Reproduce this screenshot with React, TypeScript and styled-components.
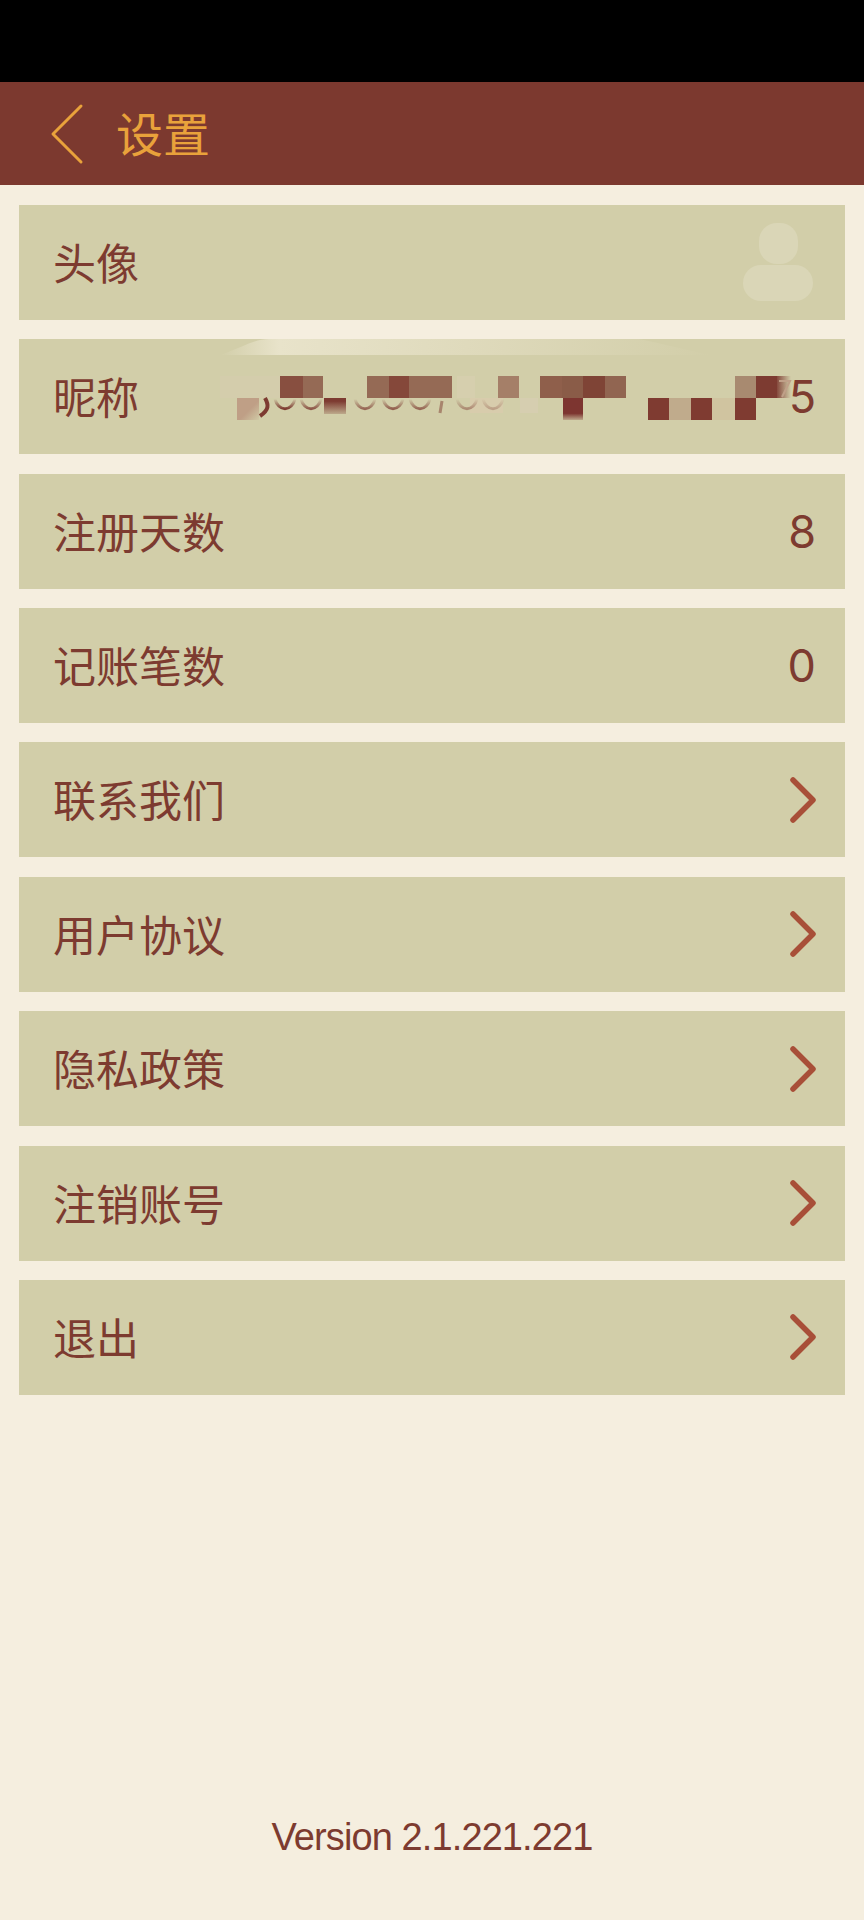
import React from "react";
import styled, { createGlobalStyle } from "styled-components";

const rows = [
  { label: "注册天数", value: "8" },
  { label: "记账笔数", value: "0" },
  { label: "联系我们" },
  { label: "用户协议" },
  { label: "隐私政策" },
  { label: "注销账号" },
  { label: "退出" },
];

// blurred-out nickname, coords are relative to the 昵称 row
const mosaic: [number, number, number, number, string][] = [
  [201, 37, 60, 22, "#d4cdac"],
  [218, 59, 22, 22, "url(#cornerFade)"],
  [261, 37, 23, 22, "#884f40"],
  [284, 37, 20, 22, "#956a55"],
  [305, 59, 22, 16, "url(#downFade)"],
  [348, 37, 22, 22, "#956a55"],
  [370, 37, 20, 22, "#85483a"],
  [390, 37, 23, 22, "#956a55"],
  [413, 37, 20, 22, "#956a55"],
  [438, 37, 18, 22, "#d6cfae"],
  [479, 37, 21, 22, "#a57f68"],
  [451, 59, 33, 15, "#d8ccac"],
  [501, 59, 18, 15, "#d6ceb0"],
  [521, 37, 22, 22, "#8f5f4b"],
  [543, 37, 21, 22, "#8a5c48"],
  [564, 37, 22, 22, "#7f4436"],
  [586, 37, 21, 22, "#916551"],
  [544, 59, 20, 22, "url(#downFadeLong)"],
  [629, 59, 21, 22, "#7f3b31"],
  [650, 59, 22, 22, "#c0ab8c"],
  [672, 59, 21, 22, "#7f3b31"],
  [693, 59, 23, 22, "#d0c4a0"],
  [716, 59, 21, 22, "#7f3b31"],
  [716, 37, 21, 22, "#a88a70"],
  [737, 37, 21, 22, "#7d3b31"],
  [758, 37, 14, 22, "url(#rightFade)"],
];

// bottoms of the digits that stick out under the mosaic
const arcs: [number, number][] = [
  [266, 1],
  [292, 0.8],
  [346, 0.7],
  [374, 0.75],
  [401, 0.7],
  [448, 0.45],
  [474, 0.3],
];

const App: React.FC = () => {
  return (
    <Page>
      <GlobalStyle />
      <StatusBar />
      <Header>
        <svg width="34" height="62" viewBox="0 0 34 62" fill="none">
          <path
            d="M31 3 L3 31 L31 59"
            stroke="#e9a23b"
            strokeWidth="3"
            strokeLinecap="round"
            strokeLinejoin="round"
          />
        </svg>
        <Title>设置</Title>
      </Header>
      <List>
        <Row>
          <Label>头像</Label>
          <Avatar>
            <AvatarHead />
            <AvatarBody />
          </Avatar>
        </Row>
        <Row>
          <Label>昵称</Label>
          <Value>5</Value>
          <Smear width="826" height="115" viewBox="0 0 826 115">
            <defs>
              <linearGradient id="glare" x1="0" x2="1" y1="0" y2="0">
                <stop offset="0" stopColor="#e8e3ca" stopOpacity="0" />
                <stop offset="0.12" stopColor="#e8e3ca" />
                <stop offset="0.5" stopColor="#dfdabc" />
                <stop offset="1" stopColor="#d2cea9" />
              </linearGradient>
              <linearGradient id="downFade" x1="0" x2="0" y1="0" y2="1">
                <stop offset="0.2" stopColor="#7d3b31" />
                <stop offset="1" stopColor="#7d3b31" stopOpacity="0.25" />
              </linearGradient>
              <linearGradient id="downFadeLong" x1="0" x2="0" y1="0" y2="1">
                <stop offset="0.7" stopColor="#7d3530" />
                <stop offset="1" stopColor="#7d3530" stopOpacity="0.25" />
              </linearGradient>
              <linearGradient id="rightFade" x1="0" x2="1" y1="0" y2="0">
                <stop offset="0" stopColor="#7d3b31" stopOpacity="0.9" />
                <stop offset="1" stopColor="#7d3b31" stopOpacity="0" />
              </linearGradient>
              <linearGradient id="cornerFade" x1="0" x2="1" y1="0" y2="1">
                <stop offset="0.55" stopColor="#bf9f86" />
                <stop offset="1" stopColor="#bf9f86" stopOpacity="0.1" />
              </linearGradient>
              <linearGradient id="cup" gradientUnits="userSpaceOnUse" x1="0" x2="0" y1="60" y2="74">
                <stop offset="0" stopColor="#7d3b31" stopOpacity="0" />
                <stop offset="0.7" stopColor="#7d3b31" />
              </linearGradient>
              <filter id="soft">
                <feGaussianBlur stdDeviation="1.5" />
              </filter>
            </defs>
            <path d="M201 16 C225 8 235 0 250 0 L620 0 C650 6 670 12 694 16 Z" fill="url(#glare)" />
            <path d="M240 -6 L340 -6" stroke="#e3dcc6" strokeWidth="3" filter="url(#soft)" />
            {mosaic.map(([x, y, w, h, fill], i) => (
              <rect key={i} x={x} y={y} width={w} height={h} fill={fill} />
            ))}
            {arcs.map(([cx, alpha]) => (
              <path
                key={cx}
                d={`M${cx - 10} 60 A10.5 14 0 0 0 ${cx + 10} 60`}
                stroke="url(#cup)"
                strokeWidth="3"
                strokeOpacity={alpha}
                fill="none"
              />
            ))}
            <path d="M246 59 C250 66 250 71 241 77" stroke="#7d3b31" strokeWidth="4" fill="none" />
            <path d="M423 62 L421 74" stroke="#7d3b31" strokeWidth="3" strokeOpacity="0.5" />
            <path d="M760 42 L771 42 L763 58" stroke="#c0a088" strokeWidth="2" fill="none" />
          </Smear>
        </Row>
        {rows.map((row) => (
          <Row key={row.label}>
            <Label>{row.label}</Label>
            {row.value ? (
              <Value>{row.value}</Value>
            ) : (
              <Chevron width="30" height="48" viewBox="0 0 30 48" fill="none">
                <path
                  d="M4 4 L24 24 L4 44"
                  stroke="#a84f38"
                  strokeWidth="5.5"
                  strokeLinecap="round"
                  strokeLinejoin="round"
                />
              </Chevron>
            )}
          </Row>
        ))}
      </List>
      <Version>Version 2.1.221.221</Version>
    </Page>
  );
};

export default App;

const GlobalStyle = createGlobalStyle`
  body {
    margin: 0;
    background-color: #f5eedf;
  }
`;

const Page = styled.div`
  width: 864px;
  height: 1920px;
  display: flex;
  flex-direction: column;
  overflow: hidden;
  background-color: #f5eedf;
  font-family: "Liberation Sans", "Noto Sans CJK SC", sans-serif;
`;

const StatusBar = styled.div`
  height: 82px;
  background-color: #000;
`;

const Header = styled.div`
  height: 103px;
  display: flex;
  align-items: center;
  padding-left: 50px;
  gap: 32px;
  background-color: #7c392f;
`;

const Title = styled.div`
  font-size: 47px;
  color: #e9a23b;
  padding-bottom: 4px;
  font-family: "Noto Sans CJK SC", sans-serif;
`;

const List = styled.div`
  display: flex;
  flex-direction: column;
  gap: 19.4px;
  padding: 19.8px 19px 0;
`;

const Row = styled.div`
  height: 115px;
  position: relative;
  display: flex;
  align-items: center;
  justify-content: space-between;
  padding: 0 29px 0 34px;
  background-color: #d2cea9;
`;

const Label = styled.div`
  font-size: 43px;
  color: #7d3b30;
  padding-bottom: 3px;
  font-family: "Noto Sans CJK SC", sans-serif;
`;

const Value = styled.div`
  font-size: 45px;
  color: #7d3b30;
  font-family: Inter, sans-serif;
`;

const Chevron = styled.svg`
  margin-right: -3px;
`;

const Avatar = styled.div`
  display: flex;
  flex-direction: column;
  align-items: center;
  gap: 1px;
  margin-right: 3px;
`;

const AvatarHead = styled.div`
  width: 39px;
  height: 41px;
  border-radius: 18px;
  background-color: #dad6b7;
`;

const AvatarBody = styled.div`
  width: 70px;
  height: 36px;
  border-radius: 18px;
  background-color: #dad6b7;
`;

const Smear = styled.svg`
  position: absolute;
  left: 0;
  top: 0;
  overflow: visible;
`;

const Version = styled.div`
  margin-top: auto;
  padding-bottom: 61px;
  text-align: center;
  font-size: 38px;
  letter-spacing: -0.9px;
  color: #7d3b30;
`;
